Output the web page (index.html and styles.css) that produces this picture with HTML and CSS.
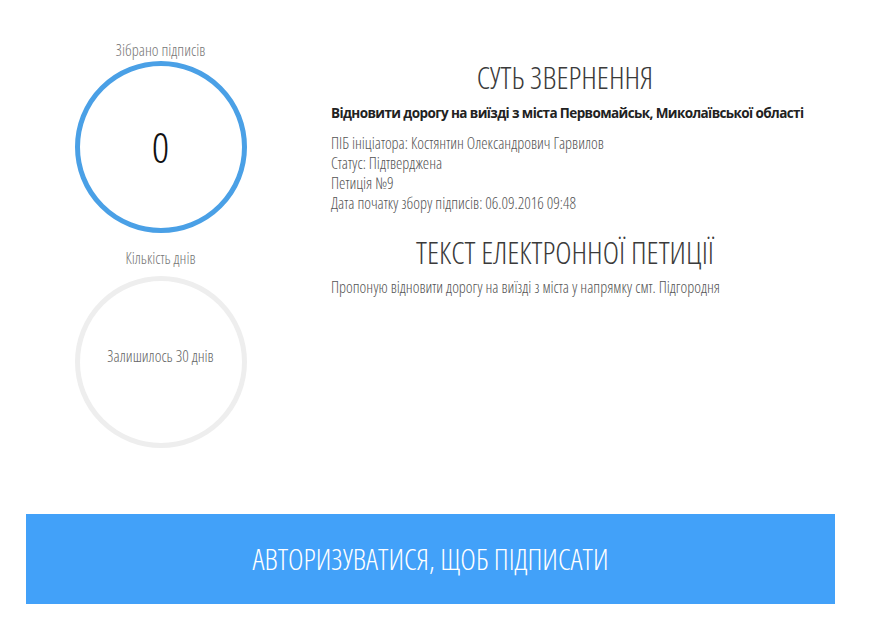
FILE: index.html
```html
<!DOCTYPE html>
<html lang="uk">
<head>
<meta charset="utf-8">
<link rel="stylesheet" href="styles.css">
</head>
<body>
<div class="page">
  <div class="main">
    <div class="stats">
      <div class="label">Зібрано підписів</div>
      <div class="ring ring-blue"><span class="count">0</span></div>
      <div class="label label-days">Кількість днів</div>
      <div class="ring ring-grey"><span class="left">Залишилось 30 днів</span></div>
    </div>
    <div class="info">
      <h1 class="title">СУТЬ ЗВЕРНЕННЯ</h1>
      <div class="subject">Відновити дорогу на виїзді з міста Первомайськ, Миколаївської області</div>
      <ul class="meta">
        <li>ПІБ ініціатора: Костянтин Олександрович Гарвилов</li>
        <li>Статус: Підтверджена</li>
        <li>Петиція №9</li>
        <li>Дата початку збору підписів: 06.09.2016 09:48</li>
      </ul>
      <h2 class="title title-text">ТЕКСТ ЕЛЕКТРОННОЇ ПЕТИЦІЇ</h2>
      <p class="body-text">Пропоную відновити дорогу на виїзді з міста у напрямку смт. Підгородня</p>
    </div>
  </div>
  <div class="action">АВТОРИЗУВАТИСЯ, ЩОБ ПІДПИСАТИ</div>
</div>
</body>
</html>
```
FILE: styles.css
```css
html, body {
  margin: 0;
  padding: 0;
  background: #fff;
}
body {
  font-family: "Open Sans", "Liberation Sans", sans-serif;
  font-stretch: 75%;
  font-weight: 300;
  color: #555;
}
.page {
  width: 869px;
}
.main {
  display: flex;
  padding-top: 41px;
}
.stats {
  width: 320px;
  display: flex;
  flex-direction: column;
  align-items: center;
}
.label {
  font-size: 16px;
  line-height: 18px;
  color: #777;
  margin-bottom: 2px;
  margin-left: 1px;
}
.label-days {
  margin-top: 16px;
  margin-bottom: 9px;
}
.ring {
  box-sizing: border-box;
  width: 172px;
  height: 172px;
  border-radius: 50%;
  display: flex;
  align-items: center;
  justify-content: center;
  margin-left: 1px;
}
.ring-blue {
  border: 5px solid #4aa0e6;
}
.ring-grey {
  border: 5px solid #eeeeee;
}
.count {
  font-size: 43px;
  color: #111;
  line-height: 1;
  margin-top: -2px;
}
.left {
  font-size: 16px;
  color: #666;
  margin-top: -12px;
}
.info {
  width: 468px;
  margin-left: 11px;
}
.title {
  margin: 0;
  font-weight: 300;
  font-size: 31px;
  line-height: 36px;
  color: #3a3a3a;
  text-align: center;
  margin-top: 18px;
}
.title-text {
  margin-top: 21px;
}
.subject {
  font-weight: 700;
  font-stretch: 100%;
  font-size: 13.5px;
  letter-spacing: -0.6px;
  line-height: 20px;
  color: #222;
  margin-top: 8px;
  white-space: nowrap;
}
.meta {
  list-style: none;
  margin: 10px 0 0;
  padding: 0;
}
.meta li {
  font-size: 16px;
  line-height: 20px;
  color: #555;
}
.body-text {
  margin: 7px 0 0;
  font-size: 16px;
  line-height: 20px;
  color: #555;
}
.action {
  margin: 66px 0 0 26px;
  width: 809px;
  height: 90px;
  background: #42a1f9;
  color: #fff;
  font-size: 29.5px;
  line-height: 90px;
  text-align: center;
}
```
